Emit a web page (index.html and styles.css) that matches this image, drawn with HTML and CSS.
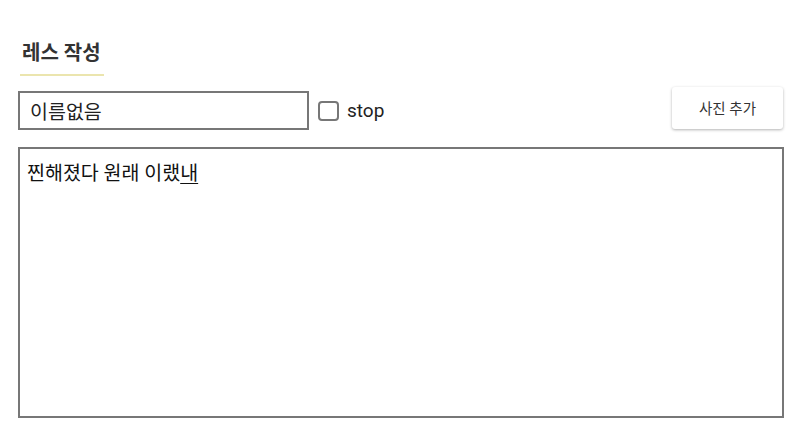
FILE: index.html
```html
<!DOCTYPE html>
<html lang="ko">
<head>
  <meta charset="UTF-8" />
  <title>레스 작성</title>
  <link rel="stylesheet" href="styles.css">
</head>
<body>
  <div class="reply-form">
    <!-- Title with underline -->
    <div class="form-title">
      <h2>레스 작성</h2>
    </div>

    <!-- Name, stop flag and photo button -->
    <div class="form-row">
      <input type="text" class="name-input" value="이름없음" />
      <label class="stop-check">
        <span class="box"></span>
        <span>stop</span>
      </label>
      <button class="photo-button">사진 추가</button>
    </div>

    <!-- Body text -->
    <div class="body-input">찐해졌다 원래 이랬<span class="composing">내</span></div>
  </div>
</body>
</html>
```

FILE: styles.css
```css
/* Basic reset */
* {
  margin: 0;
  padding: 0;
  box-sizing: border-box;
  font-family: Roboto, "Noto Sans CJK KR", sans-serif;
}

body {
  background-color: #ffffff;
  color: #222;
}

.reply-form {
  width: 766px;
  margin-left: 18px;
  padding-top: 40px;
}

/* Title */
.form-title {
  display: inline-block;
  margin-left: 2px;
  padding: 0 3px 8px 2px;
  border-bottom: 2px solid #ebe5ae;
}

.form-title h2 {
  font-size: 20px;
  font-weight: bold;
  color: #333;
  line-height: 26px;
}

/* Name row */
.form-row {
  display: flex;
  align-items: center;
  margin-top: 9px;
}

.name-input {
  width: 291px;
  height: 39px;
  margin-top: 6px;
  border: 2px solid #777;
  padding: 0 10px;
  font-size: 19.5px;
  color: #222;
  outline: none;
}

.stop-check {
  display: flex;
  align-items: center;
  gap: 8px;
  margin-left: 9px;
  margin-top: 6px;
  font-size: 19px;
  color: #222;
}

.stop-check .box {
  width: 21px;
  height: 20px;
  border: 2px solid #777;
  border-radius: 4px;
}

.photo-button {
  margin-left: auto;
  margin-right: 1px;
  width: 111px;
  height: 42px;
  border: none;
  border-radius: 3px;
  background-color: #fff;
  box-shadow: 0 1px 3px rgba(0, 0, 0, 0.3);
  font-size: 14.5px;
  color: #333;
}

/* Body text area */
.body-input {
  margin-top: 17px;
  height: 271px;
  border: 2px solid #777;
  padding: 12px 7px;
  font-size: 19.5px;
  line-height: 26px;
  color: #111;
}

.composing {
  text-decoration: underline;
  text-underline-offset: 3px;
}
```
